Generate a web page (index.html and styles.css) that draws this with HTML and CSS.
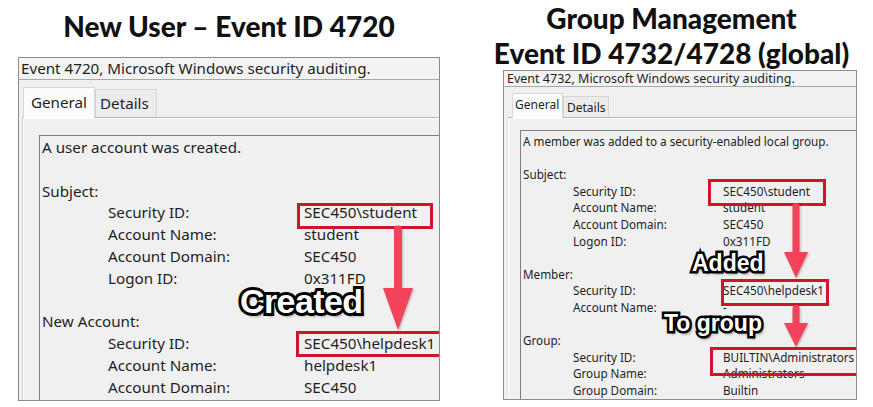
FILE: index.html
```html
<!DOCTYPE html>
<html lang="en">
<head>
<meta charset="utf-8">
<title>Event IDs</title>
<link rel="stylesheet" href="styles.css">
</head>
<body>
<div class="page">
  <section class="col col-left">
    <h1 class="title title-left">New User – Event ID 4720</h1>
    <div class="win win-l">
      <div class="win-head">Event 4720, Microsoft Windows security auditing.</div>
      <div class="tabs">
        <span class="tab tab-active">General</span>
        <span class="tab">Details</span>
      </div>
      <div class="tabpanel">
        <div class="box">
          <div class="line">A user account was created.</div>
          <div class="line blank"></div>
          <div class="line">Subject:</div>
          <div class="row"><span class="k">Security ID:</span><span class="v hl hl-l1">SEC450\student</span></div>
          <div class="row"><span class="k">Account Name:</span><span class="v">student</span></div>
          <div class="row"><span class="k">Account Domain:</span><span class="v">SEC450</span></div>
          <div class="row"><span class="k">Logon ID:</span><span class="v">0x311FD</span></div>
          <div class="line blank"></div>
          <div class="line">New Account:</div>
          <div class="row"><span class="k">Security ID:</span><span class="v hl hl-l2">SEC450\helpdesk1</span></div>
          <div class="row"><span class="k">Account Name:</span><span class="v">helpdesk1</span></div>
          <div class="row"><span class="k">Account Domain:</span><span class="v">SEC450</span></div>
        </div>
      </div>
      <svg class="arrow arrow-l" width="30" height="106" viewBox="0 0 30 106">
        <line x1="15" y1="4.5" x2="15" y2="68" stroke="#f2435a" stroke-width="8" stroke-linecap="round"/>
        <polygon points="0,63 30,63 15,105" fill="#f2435a"/>
      </svg>
      <div class="callout callout-created">Created</div>
    </div>
  </section>

  <section class="col col-right">
    <h1 class="title title-right">Group Management<br>Event ID 4732/4728 (global)</h1>
    <div class="win win-r">
      <div class="win-head">Event 4732, Microsoft Windows security auditing.</div>
      <div class="tabs">
        <span class="tab tab-active">General</span>
        <span class="tab">Details</span>
      </div>
      <div class="tabpanel">
        <div class="box">
          <div class="line">A member was added to a security-enabled local group.</div>
          <div class="line blank"></div>
          <div class="line">Subject:</div>
          <div class="row"><span class="k">Security ID:</span><span class="v hl hl-r1">SEC450\student</span></div>
          <div class="row"><span class="k">Account Name:</span><span class="v">student</span></div>
          <div class="row"><span class="k">Account Domain:</span><span class="v">SEC450</span></div>
          <div class="row"><span class="k">Logon ID:</span><span class="v">0x311FD</span></div>
          <div class="line blank"></div>
          <div class="line">Member:</div>
          <div class="row"><span class="k">Security ID:</span><span class="v hl hl-r2">SEC450\helpdesk1</span></div>
          <div class="row"><span class="k">Account Name:</span><span class="v">-</span></div>
          <div class="line blank"></div>
          <div class="line">Group:</div>
          <div class="row"><span class="k">Security ID:</span><span class="v hl hl-r3">BUILTIN\Administrators</span></div>
          <div class="row"><span class="k">Group Name:</span><span class="v">Administrators</span></div>
          <div class="row"><span class="k">Group Domain:</span><span class="v">Builtin</span></div>
        </div>
      </div>
      <svg class="arrow arrow-r1" width="24" height="76" viewBox="0 0 24 76">
        <line x1="12" y1="3.5" x2="12" y2="52" stroke="#f2435a" stroke-width="7" stroke-linecap="round"/>
        <polygon points="0,49 24,49 12,75" fill="#f2435a"/>
      </svg>
      <svg class="arrow arrow-r2" width="24" height="43" viewBox="0 0 24 43">
        <line x1="12" y1="3.5" x2="12" y2="21" stroke="#f2435a" stroke-width="7" stroke-linecap="round"/>
        <polygon points="0,18 24,18 12,42" fill="#f2435a"/>
      </svg>
      <div class="callout callout-small callout-added">Added</div>
      <div class="callout callout-small callout-group">To group</div>
    </div>
  </section>
</div>
</body>
</html>
```

FILE: styles.css
```css
* { box-sizing: border-box; }

html, body {
  margin: 0;
  padding: 0;
  background: #ffffff;
}

body {
  width: 873px;
  height: 407px;
  overflow: hidden;
  font-family: "Noto Sans", "DejaVu Sans", sans-serif;
  color: #1e1e1e;
}

.page {
  display: flex;
  height: 407px;
}

.col {
  display: flex;
  flex-direction: column;
}

.col-left {
  width: 440px;
  padding-left: 18px;
}

.col-right {
  width: 403px;
  margin-left: 30px;
}

/* Titles */
.title {
  margin: 0;
  font-family: Lato, "Noto Sans", sans-serif;
  font-weight: 900;
  font-size: 28px;
  color: #111111;
  text-align: center;
  white-space: nowrap;
}

.title-left {
  height: 57px;
  padding-top: 12px;
  line-height: 28px;
}

.title-right {
  height: 70px;
  padding-top: 1px;
  line-height: 35px;
  position: relative;
  z-index: 2;
}

/* Window frames */
.win {
  position: relative;
  display: flex;
  flex-direction: column;
  border: 1px solid #8c8c8c;
  background: #f0f0f0;
  overflow: hidden;
}

.win-l {
  width: 422px;
  height: 344px;
}

.win-r {
  width: 354px;
  height: 330px;
  margin-left: 33px;
}

.win-head {
  flex: none;
  background: #f3f3f3;
  border-bottom: 1px solid #a8a8a8;
  white-space: nowrap;
}

.win-l .win-head {
  height: 22px;
  line-height: 21px;
  font-size: 15.2px;
  padding-left: 2px;
}

.win-r .win-head {
  height: 16px;
  line-height: 15px;
  font-size: 12.5px;
  padding-left: 3px;
}

/* Tabs */
.tabs {
  flex: none;
  display: flex;
  align-items: flex-end;
}

.win-l .tabs {
  height: 37px;
  padding: 7px 0 0 4px;
}

.win-r .tabs {
  height: 30px;
  padding: 6px 0 0 8px;
}

.tab {
  display: block;
  background: #ececec;
  border: 1px solid #d6d6d6;
  border-bottom: none;
  white-space: nowrap;
}

.tab-active {
  position: relative;
  z-index: 1;
  background: #fcfcfc;
  margin-bottom: -1px;
}

.win-l .tab {
  font-size: 15.2px;
  width: 62px;
  height: 28px;
  line-height: 27px;
  padding-left: 4px;
}

.win-l .tab-active {
  width: 72px;
  height: 31px;
  line-height: 29px;
  padding-left: 7px;
}

.win-r .tab {
  font-size: 12px;
  width: 46px;
  height: 21px;
  line-height: 21px;
  padding-left: 3px;
}

.win-r .tab-active {
  width: 51px;
  height: 25px;
  line-height: 21px;
  padding-left: 2px;
}

/* Tab panel and read-only text box */
.tabpanel {
  flex: none;
  border-top: 1px solid #b4b4b4;
  border-left: 1px solid #d2d2d2;
  box-shadow: inset 1px 1px 0 #ffffff;
  margin-left: 3px;
}

.win-l .tabpanel {
  padding: 17px 0 0 16px;
}

.win-r .tabpanel {
  padding: 12px 0 0 12px;
  border-left-color: #e2e2e2;
}

.box {
  border: 1px solid #7f7f7f;
  background: #f0f0f0;
  margin-right: -40px;
  height: 420px;
  white-space: nowrap;
}

.win-l .box {
  font-size: 15.2px;
  line-height: 21.8px;
  padding: 1px 0 0 2px;
}

.win-r .box {
  font-size: 11.7px;
  line-height: 16.6px;
  padding: 2px 0 0 2px;
}

.win-l .line.blank { height: 21.8px; }
.win-r .line.blank { height: 16.6px; }

.row {
  display: flex;
}

.win-l .row { padding-left: 66px; }
.win-r .row { padding-left: 50px; }

.win-l .k { width: 196px; flex: none; }
.win-r .k { width: 150px; flex: none; }

/* Red highlight frames */
.hl {
  position: relative;
}

.hl::after {
  content: "";
  position: absolute;
  border: 3px solid #d0142c;
}

.hl-l1::after { left: -7px; width: 130px; top: 0.5px; height: 20px; }
.hl-l2::after { left: -8px; width: 143px; top: -2px; height: 20px; }
.hl-r1::after { left: -15px; width: 112px; top: -4px; height: 21px; }
.hl-r2::after { left: -2px; width: 102px; top: -3px; height: 21px; }
.hl-r3::after { left: -13px; width: 150px; top: -1.5px; height: 23px; }

/* Arrows and callouts over the dialogs */
.arrow {
  position: absolute;
  display: block;
  filter: drop-shadow(1px 1px 1px rgba(0, 0, 0, 0.25));
}

.arrow-l  { left: 364px; top: 167px; }
.arrow-r1 { left: 280px; top: 132px; }
.arrow-r2 { left: 280px; top: 234px; }

.callout {
  position: absolute;
  font-family: "Liberation Sans", Arial, sans-serif;
  font-weight: 700;
  color: #ffffff;
  white-space: nowrap;
  paint-order: stroke fill;
  -webkit-text-stroke: 6px #000000;
  text-shadow: 2px 3px 3px rgba(0, 0, 0, 0.55);
}

.callout-created {
  font-size: 34px;
  line-height: 34px;
  letter-spacing: -0.6px;
  left: 221px;
  top: 226px;
}

.callout-small {
  font-size: 23px;
  line-height: 23px;
  -webkit-text-stroke: 5px #000000;
}

.callout-added { left: 188px; top: 181px; }
.callout-group { left: 160px; top: 241px; }
```
